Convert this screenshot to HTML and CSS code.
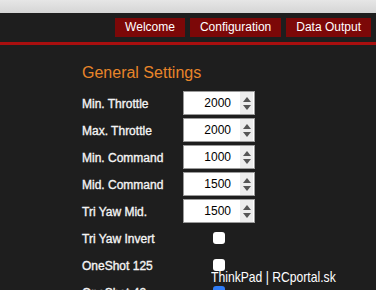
FILE: index.html
```html
<!DOCTYPE html>
<html lang="en">
<head>
  <meta charset="UTF-8"/>
  <title>Configuration</title>
  <link rel="stylesheet" href="styles.css">
</head>
<body>
  <div class="titlebar"></div>

  <nav class="nav">
    <button class="tab">Welcome</button>
    <button class="tab">Configuration</button>
    <button class="tab">Data Output</button>
  </nav>

  <main class="content">
    <h2 class="section-title">General Settings</h2>

    <div class="settings">
      <label>Min. Throttle</label>
      <div class="num"><span class="val">2000</span><span class="spin"><i class="up"></i><i class="down"></i></span></div>

      <label>Max. Throttle</label>
      <div class="num"><span class="val">2000</span><span class="spin"><i class="up"></i><i class="down"></i></span></div>

      <label>Min. Command</label>
      <div class="num"><span class="val">1000</span><span class="spin"><i class="up"></i><i class="down"></i></span></div>

      <label>Mid. Command</label>
      <div class="num"><span class="val">1500</span><span class="spin"><i class="up"></i><i class="down"></i></span></div>

      <label>Tri Yaw Mid.</label>
      <div class="num"><span class="val">1500</span><span class="spin"><i class="up"></i><i class="down"></i></span></div>

      <label>Tri Yaw Invert</label>
      <div class="check-cell"><span class="check"></span></div>

      <label>OneShot 125</label>
      <div class="check-cell"><span class="check"></span></div>

      <label>OneShot 42</label>
      <div class="check-cell"><span class="check checked"></span></div>
    </div>
  </main>

  <div class="watermark">ThinkPad | RCportal.sk</div>
</body>
</html>
```

FILE: styles.css
```css
* {
  box-sizing: border-box;
}

body {
  margin: 0;
  height: 290px;
  overflow: hidden;
  position: relative;
  background: #1e1e1e;
  font-family: 'Liberation Sans', Arial, sans-serif;
  color: #fff;
}

.titlebar {
  height: 13px;
  background: linear-gradient(#e6e6e6, #d5d5d5);
}

.nav {
  display: flex;
  justify-content: flex-end;
  gap: 5px;
  padding: 5px 5px 5px;
  border-bottom: 3px solid #a90f0f;
}

.tab {
  height: 19px;
  padding: 0 10px;
  border: none;
  background: #7c0808;
  color: #fff;
  font-family: 'Liberation Sans', Arial, sans-serif;
  font-size: 12px;
  line-height: 19px;
}

.content {
  padding-left: 82px;
}

.section-title {
  margin: 18px 0 8px;
  font-size: 16px;
  line-height: 20px;
  font-weight: normal;
  color: #e8852a;
}

.settings {
  display: grid;
  grid-template-columns: 101px 72px;
  grid-auto-rows: 24px;
  row-gap: 3px;
  align-items: center;
}

.settings label {
  padding-top: 2px;
  font-size: 12px;
  color: #f4f4f4;
  -webkit-text-stroke: 0.35px #f4f4f4;
}

.num {
  display: flex;
  height: 24px;
  background: #fff;
  border: 1px solid #9a9a9a;
  color: #000;
  font-size: 12px;
}

.val {
  flex: 1;
  text-align: right;
  padding-right: 9px;
  line-height: 23px;
}

.spin {
  width: 13px;
  margin-right: 1px;
  background: #ececec;
  display: flex;
  flex-direction: column;
  justify-content: center;
  align-items: center;
  gap: 3px;
}

.spin i {
  width: 0;
  height: 0;
  border-left: 4px solid transparent;
  border-right: 4px solid transparent;
}

.spin .up {
  border-bottom: 5px solid #555;
}

.spin .down {
  border-top: 5px solid #555;
}

.check-cell {
  display: flex;
  justify-content: center;
}

.check {
  width: 12px;
  height: 12px;
  border-radius: 3px;
  background: #fff;
}

.check.checked {
  background: #2f7cf6;
}

.watermark {
  position: absolute;
  left: 211px;
  top: 268px;
  font-size: 15px;
  color: #fff;
  transform: scaleX(0.81);
  transform-origin: left;
  white-space: nowrap;
}
```
